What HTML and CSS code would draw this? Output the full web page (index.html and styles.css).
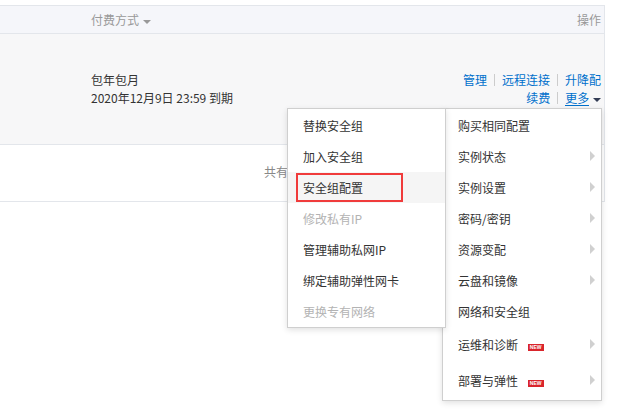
FILE: index.html
```html
<!doctype html>
<html lang="zh-CN">
  <head>
    <meta charset="UTF-8" />
    <title>实例列表</title>
    <link rel="stylesheet" href="styles.css">
  </head>
  <body>
    <div class="page">
      <div class="table">
        <div class="thead">
          <div class="col-pay">付费方式 <span class="caret caret-gray"></span></div>
          <div class="col-op">操作</div>
        </div>
        <div class="row">
          <div class="col-pay">
            <div>包年包月</div>
            <div>2020年12月9日 23:59 到期</div>
          </div>
          <div class="col-op actions">
            <div>
              <a>管理</a><span class="sep"></span><a>远程连接</a><span class="sep"></span><a>升降配</a>
            </div>
            <div>
              <a>续费</a><span class="sep"></span><a class="more">更多</a> <span class="caret caret-blue"></span>
            </div>
          </div>
        </div>
        <!-- 分页信息被菜单挡住，只露出开头 -->
        <div class="footer">共有</div>
      </div>

      <!-- 更多 下拉菜单 -->
      <ul class="menu menu-main">
        <li>购买相同配置</li>
        <li class="sub">实例状态</li>
        <li class="sub">实例设置</li>
        <li class="sub">密码/密钥</li>
        <li class="sub">资源变配</li>
        <li class="sub">云盘和镜像</li>
        <li>网络和安全组</li>
        <li class="sub tall">运维和诊断 <span class="badge">NEW</span></li>
        <li class="sub tall">部署与弹性 <span class="badge">NEW</span></li>
      </ul>
      <ul class="menu menu-sub">
        <li>替换安全组</li>
        <li>加入安全组</li>
        <li class="active">安全组配置</li>
        <li class="disabled">修改私有IP</li>
        <li>管理辅助私网IP</li>
        <li>绑定辅助弹性网卡</li>
        <li class="disabled">更换专有网络</li>
      </ul>
      <div class="mark"></div>
    </div>
  </body>
</html>
```

FILE: styles.css
```css
html,
body {
  margin: 0;
  padding: 0;
  background: #fff;
}
.page {
  position: relative;
  width: 618px;
  height: 416px;
  padding-top: 5px;
  box-sizing: border-box;
  font-family: "Noto Sans CJK SC", "Liberation Sans", sans-serif;
  font-size: 12px;
  color: #333;
}
.table {
  width: 605px;
  border-top: 1px solid #e3e6eb;
  border-right: 1px solid #e3e6eb;
  box-sizing: border-box;
}
.thead {
  display: flex;
  justify-content: space-between;
  height: 27px;
  line-height: 27px;
  background: #f5f6fa;
  border-bottom: 1px solid #e3e6eb;
  color: #999;
}
.col-pay {
  padding-left: 91px;
}
.col-op {
  padding-right: 3px;
}
.caret {
  display: inline-block;
  width: 0;
  height: 0;
  border-left: 4px solid transparent;
  border-right: 4px solid transparent;
  border-top: 4px solid #999;
  vertical-align: middle;
  margin-left: 1px;
}
.caret-blue {
  border-top-color: #333c55;
}
.row {
  display: flex;
  justify-content: space-between;
  align-items: center;
  height: 110px;
  background: #f7f7f8;
  border-bottom: 1px solid #e3e6eb;
  line-height: 18px;
}
.actions {
  text-align: right;
}
.actions a {
  color: #0070cc;
}
.actions .more {
  border-bottom: 1px solid #0070cc;
  line-height: 14px;
  display: inline-block;
}
.sep {
  display: inline-block;
  width: 1px;
  height: 12px;
  background: #ccc;
  margin: 0 7px;
  vertical-align: -1px;
}
.footer {
  height: 56px;
  line-height: 54px;
  padding-left: 264px;
  border-bottom: 1px solid #e3e6eb;
  color: #888;
}
.menu {
  position: absolute;
  top: 108px;
  margin: 0;
  padding: 1px 0 0;
  list-style: none;
  background: #fff;
  border: 1px solid #cfcfcf;
  box-shadow: 0 2px 6px rgba(0, 0, 0, 0.12);
}
.menu li {
  position: relative;
  height: 31px;
  line-height: 31px;
  padding-left: 15px;
  white-space: nowrap;
}
.menu-main {
  left: 442px;
  width: 158px;
  padding-bottom: 1px;
}
.menu-main li.tall {
  height: 36px;
  line-height: 36px;
}
.menu-sub {
  left: 287px;
  width: 157px;
}
.menu-sub li.active {
  background: #f5f5f5;
}
.menu li.disabled {
  color: #b3b3b3;
}
.menu li.sub::after {
  content: "";
  position: absolute;
  right: 6px;
  top: 50%;
  margin-top: -6px;
  border-top: 5px solid transparent;
  border-bottom: 5px solid transparent;
  border-left: 5px solid #d0d0d0;
}
.badge {
  display: inline-block;
  width: 16px;
  height: 7px;
  margin-left: 7px;
  background: #d9252b;
  color: #fff;
  font-family: "Liberation Sans", sans-serif;
  font-size: 5px;
  font-weight: bold;
  line-height: 7px;
  text-align: center;
  vertical-align: 1px;
}
.mark {
  position: absolute;
  left: 296px;
  top: 173px;
  width: 103px;
  height: 25px;
  border: 2px solid #f03b3b;
}
```
